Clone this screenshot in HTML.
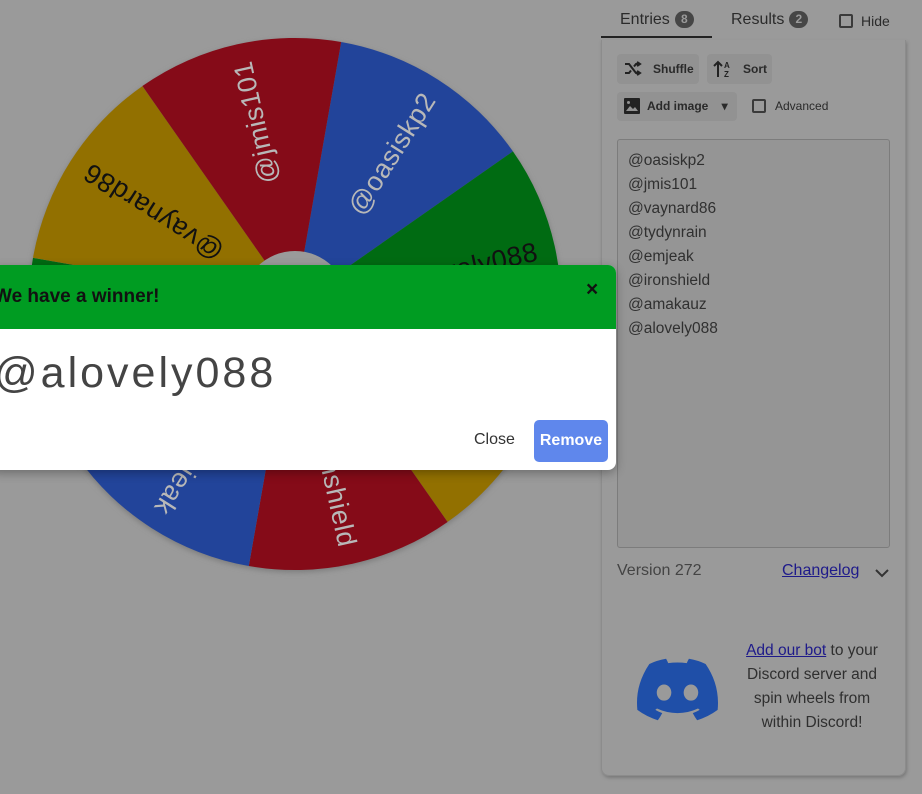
<!DOCTYPE html>
<html><head><meta charset="utf-8"><style>
*{box-sizing:border-box;margin:0;padding:0}
body{width:922px;height:794px;overflow:hidden;background:#9a9a9a;font-family:"Liberation Sans",Arial,sans-serif;position:relative;color:#2a2a2a}
.abs{position:absolute}
.tab{position:absolute;top:11px;font-size:16px;color:#2b2b2b;font-weight:500}
.badge{display:inline-block;background:#464646;color:#9a9a9a;border-radius:9px;font-size:12px;font-weight:bold;width:19px;height:17px;line-height:17px;text-align:center;margin-left:5px;vertical-align:1px}
.btn{position:absolute;background:#929292;border-radius:4px;font-size:12px;color:#2a2a2a;height:30px;line-height:30px;font-weight:bold}
.cb{position:absolute;width:14px;height:14px;border:2px solid #3a3a3a;border-radius:2px}
</style></head><body>
<svg class="abs" style="left:0;top:0" width="600" height="600">
<defs><filter id="sh" x="-10%" y="-10%" width="120%" height="120%"><feGaussianBlur stdDeviation="3"/></filter></defs>
<circle cx="295" cy="306" r="266" fill="#7a7a7a" filter="url(#sh)"/>
<g transform="translate(295,304)" font-family="Liberation Sans,sans-serif" font-size="27" letter-spacing="0.5">
<g transform="rotate(32.5)"><path d="M0 0 L-101.8 -245.8 A266 266 0 0 1 101.8 -245.8 Z" fill="#22449a"/><text transform="rotate(-90)" x="248" y="10" text-anchor="end" fill="#b8b8b8">@oasiskp2</text></g>
<g transform="rotate(77.5)"><path d="M0 0 L-101.8 -245.8 A266 266 0 0 1 101.8 -245.8 Z" fill="#006b12"/><text transform="rotate(-90)" x="248" y="10" text-anchor="end" fill="#111">@alovely088</text></g>
<g transform="rotate(122.5)"><path d="M0 0 L-101.8 -245.8 A266 266 0 0 1 101.8 -245.8 Z" fill="#927000"/><text transform="rotate(-90)" x="248" y="10" text-anchor="end" fill="#111">@amakauz</text></g>
<g transform="rotate(167.5)"><path d="M0 0 L-101.8 -245.8 A266 266 0 0 1 101.8 -245.8 Z" fill="#850b18"/><text transform="rotate(-90)" x="248" y="10" text-anchor="end" fill="#b8b8b8">@ironshield</text></g>
<g transform="rotate(212.5)"><path d="M0 0 L-101.8 -245.8 A266 266 0 0 1 101.8 -245.8 Z" fill="#22449a"/><text transform="rotate(-90)" x="248" y="10" text-anchor="end" fill="#b8b8b8">@emjeak</text></g>
<g transform="rotate(257.5)"><path d="M0 0 L-101.8 -245.8 A266 266 0 0 1 101.8 -245.8 Z" fill="#006b12"/><text transform="rotate(-90)" x="248" y="10" text-anchor="end" fill="#111">@tydynrain</text></g>
<g transform="rotate(302.5)"><path d="M0 0 L-101.8 -245.8 A266 266 0 0 1 101.8 -245.8 Z" fill="#927000"/><text transform="rotate(-90)" x="248" y="10" text-anchor="end" fill="#111">@vaynard86</text></g>
<g transform="rotate(347.5)"><path d="M0 0 L-101.8 -245.8 A266 266 0 0 1 101.8 -245.8 Z" fill="#850b18"/><text transform="rotate(-90)" x="248" y="10" text-anchor="end" fill="#b8b8b8">@jmis101</text></g>
<circle r="53" fill="#9a9a9a"/>
</g></svg>

<!-- right panel -->
<div class="tab" style="left:620px">Entries<span class="badge">8</span></div>
<div class="tab" style="left:731px">Results<span class="badge">2</span></div>
<div class="cb" style="left:839px;top:14px"></div>
<div class="tab" style="left:861px;font-size:14px;top:13px;font-weight:normal">Hide</div>
<div class="abs" style="left:601px;top:36px;width:111px;height:2px;background:#222"></div>
<div class="abs" style="left:601px;top:40px;width:305px;height:736px;border:1px solid #8c8c8c;border-top:none;border-radius:0 0 8px 8px;box-shadow:1px 2px 3px #7a7a7a"></div>
<div class="btn" style="left:617px;top:54px;width:82px;padding-left:36px">Shuffle</div>
<svg class="abs" style="left:624px;top:61px" width="18" height="16"><path d="M1 3h4l7 9h4M1 12h4l2-2.5M10 5.5l2-2.5h4M13 1l3 2-3 2M13 10l3 2-3 2" fill="none" stroke="#222" stroke-width="2"/></svg>
<div class="btn" style="left:707px;top:54px;width:65px;padding-left:36px">Sort</div>
<svg class="abs" style="left:713px;top:59px" width="18" height="20"><path d="M5 18V3M1 7l4-4 4 4" fill="none" stroke="#222" stroke-width="2"/><text x="11" y="9" font-size="8" font-weight="bold" fill="#222" font-family="Liberation Sans">A</text><text x="11" y="18" font-size="8" font-weight="bold" fill="#222" font-family="Liberation Sans">Z</text></svg>
<div class="btn" style="left:617px;top:92px;width:120px;height:29px;line-height:29px;padding-left:30px">Add image &nbsp;&nbsp;&nbsp;▾</div>
<svg class="abs" style="left:624px;top:98px" width="16" height="16"><rect width="16" height="16" rx="1" fill="#222"/><path d="M2 13l4-5 3 3 2-2 3 4z" fill="#929292"/><circle cx="4.5" cy="4.5" r="1.5" fill="#929292"/></svg>
<div class="cb" style="left:752px;top:99px"></div>
<div class="abs" style="left:775px;top:99px;font-size:12px">Advanced</div>
<div class="abs" style="left:617px;top:139px;width:273px;height:409px;background:#959595;border:1px solid #7c7c7c;border-radius:3px;padding:9px 0 0 10px;font-size:15.5px;line-height:24px;color:#303030">@oasiskp2<br>@jmis101<br>@vaynard86<br>@tydynrain<br>@emjeak<br>@ironshield<br>@amakauz<br>@alovely088</div>
<div class="abs" style="left:617px;top:562px;font-size:16px;color:#444">Version 272</div>
<div class="abs" style="left:782px;top:562px;font-size:16px;color:#1e1a8a;text-decoration:underline">Changelog</div>
<svg class="abs" style="left:874px;top:567px" width="16" height="12"><path d="M2 3l6 6 6-6" fill="none" stroke="#333" stroke-width="2"/></svg>
<svg class="abs" style="left:637px;top:658px" width="81" height="63" viewBox="0 0 127.14 96.36"><path fill="#1f4fa8" d="M107.7 8.07A105.15 105.15 0 0 0 81.47 0a72.060 72.060 0 0 0-3.36 6.830 97.680 97.680 0 0 0-29.110 0A72.370 72.370 0 0 0 45.640 0a105.890 105.890 0 0 0-26.250 8.090C2.790 32.650-1.710 56.600.540 80.210a105.730 105.730 0 0 0 32.170 16.150 77.700 77.700 0 0 0 6.890-11.110 68.420 68.420 0 0 1-10.850-5.180c.910-.660 1.800-1.340 2.660-2a75.570 75.570 0 0 0 64.320 0c.870.710 1.760 1.390 2.660 2a68.680 68.680 0 0 1-10.870 5.190 77 77 0 0 0 6.890 11.100 105.250 105.250 0 0 0 32.190-16.140c2.640-27.380-4.510-51.110-18.900-72.150zM42.450 65.690C36.180 65.690 31 60 31 53s5-12.740 11.430-12.740S54 46 53.890 53s-5.050 12.690-11.440 12.690zm42.240 0C78.410 65.690 73.250 60 73.250 53s5-12.740 11.440-12.740S96.230 46 96.120 53s-5.040 12.690-11.430 12.690z"/></svg>
<div class="abs" style="left:737px;top:639px;width:150px;text-align:center;font-size:15.5px;line-height:24px;color:#2f2f2f"><span style="color:#1e1a8a;text-decoration:underline">Add our bot</span> to your Discord server and spin wheels from within Discord!</div>

<!-- dialog -->
<div class="abs" style="left:-10px;top:265px;width:626px;height:205px;background:#fff;border-radius:8px;overflow:hidden;box-shadow:0 3px 10px rgba(0,0,0,.3)">
<div style="height:64px;background:#009c22;position:relative">
<div class="abs" style="left:4px;top:21px;font-size:19px;color:#111;font-weight:bold">We have a winner!</div>
<div class="abs" style="left:596px;top:13px;font-size:21px;color:#111;font-weight:bold">×</div>
</div>
<div class="abs" style="left:4px;top:84px;font-size:43px;color:#444;letter-spacing:3px">@alovely088</div>
<div class="abs" style="left:484px;top:166px;font-size:16px;color:#333">Close</div>
<div class="abs" style="left:544px;top:155px;width:74px;height:42px;background:#5f87ec;border-radius:5px;color:#fff;font-weight:bold;font-size:16px;line-height:42px;text-align:center">Remove</div>
</div>
</body></html>
